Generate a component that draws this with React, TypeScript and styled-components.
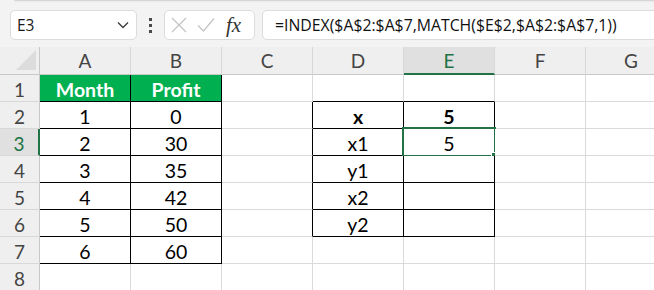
import React from 'react'
import styled, { createGlobalStyle } from 'styled-components'

const GlobalStyle = createGlobalStyle`
  html, body {
    margin: 0;
    padding: 0;
    background: #f3f3f3;
  }
  #root {
    width: 654px;
    height: 290px;
    overflow: hidden;
  }
`

const GREEN = '#217346'
const GRID = '#dadada'

interface CellData {
  text?: string
  bold?: boolean
  fill?: string
  color?: string
  right?: boolean
  bottom?: boolean
  selected?: boolean
}

const COLUMNS = ['A', 'B', 'C', 'D', 'E', 'F', 'G']
const ACTIVE_COL = 'E'
const ACTIVE_ROW = 3

const months = ['1', '2', '3', '4', '5', '6']
const profits = ['0', '30', '35', '42', '50', '60']
const labels = ['x', 'x1', 'y1', 'x2', 'y2']

const buildSheet = (): CellData[][] => {
  const rows: CellData[][] = []
  for (let r = 1; r <= 8; r++) {
    const row: CellData[] = COLUMNS.map(() => ({}))
    if (r === 1) {
      row[0] = { text: 'Month', bold: true, fill: '#00b050', color: '#ffffff', right: true, bottom: true }
      row[1] = { text: 'Profit', bold: true, fill: '#00b050', color: '#ffffff', right: true, bottom: true }
      row[3] = { bottom: true }
      row[4] = { bottom: true }
    }
    if (r >= 2 && r <= 7) {
      row[0] = { text: months[r - 2], right: true, bottom: true }
      row[1] = { text: profits[r - 2], right: true, bottom: true }
    }
    if (r >= 2 && r <= 6) {
      row[2] = { right: true }
      row[3] = { text: labels[r - 2], bold: r === 2, right: true, bottom: true }
      row[4] = { right: true, bottom: true }
    }
    if (r === 2) row[4] = { text: '5', bold: true, right: true, bottom: true }
    if (r === 3) row[4] = { text: '5', right: true, bottom: true, selected: true }
    rows.push(row)
  }
  return rows
}

const App: React.FC = () => {
  const sheet = buildSheet()
  return (
    <>
      <GlobalStyle />
      <Window>
        <RibbonEdge />
        <FormulaBar>
          <NameBox>
            <NameText>E3</NameText>
            <svg width="12" height="8" viewBox="0 0 12 8">
              <path d="M1 1.5 L6 6.5 L11 1.5" fill="none" stroke="#3a3a3a" strokeWidth="1.3" />
            </svg>
          </NameBox>
          <Grip>
            <span />
            <span />
            <span />
          </Grip>
          <ButtonGroup>
            <svg width="16" height="16" viewBox="0 0 16 16">
              <path d="M1 1 L15 15 M15 1 L1 15" stroke="#c4c4c4" strokeWidth="1.3" />
            </svg>
            <svg width="18" height="16" viewBox="0 0 18 16">
              <path d="M1 8.5 L6.5 14 L17 1.5" fill="none" stroke="#c4c4c4" strokeWidth="1.3" />
            </svg>
            <Fx>fx</Fx>
          </ButtonGroup>
          <FormulaInput>=INDEX($A$2:$A$7,MATCH($E$2,$A$2:$A$7,1))</FormulaInput>
        </FormulaBar>
        <Sheet>
          <Corner>
            <svg width="22" height="21" viewBox="0 0 22 21">
              <path d="M21 0 L21 20 L1 20 Z" fill="#dcdcdc" />
            </svg>
          </Corner>
          {COLUMNS.map((c) => (
            <ColHeader key={c} $active={c === ACTIVE_COL}>
              {c}
            </ColHeader>
          ))}
          {sheet.map((row, i) => (
            <React.Fragment key={i}>
              <RowHeader $active={i + 1 === ACTIVE_ROW}>{i + 1}</RowHeader>
              {row.map((cell, j) => (
                <Cell
                  key={j}
                  $bold={cell.bold}
                  $fill={cell.fill}
                  $color={cell.color}
                  $right={cell.right}
                  $bottom={cell.bottom}
                >
                  {cell.text}
                  {cell.selected && (
                    <Selection>
                      <FillHandle />
                    </Selection>
                  )}
                </Cell>
              ))}
            </React.Fragment>
          ))}
        </Sheet>
      </Window>
    </>
  )
}

const Window = styled.div`
  width: 654px;
  height: 290px;
  overflow: hidden;
  background: #f3f3f3;
  display: flex;
  flex-direction: column;
`

const RibbonEdge = styled.div`
  height: 1px;
  margin-left: 14px;
  background: #ffffff;
  border-bottom: 1px solid #d6d6d6;
  border-bottom-left-radius: 6px;
  box-shadow: 0 1px 2px rgba(0, 0, 0, 0.06);
`

const FormulaBar = styled.div`
  height: 47px;
  box-sizing: border-box;
  display: flex;
  align-items: center;
  padding: 9px 0 7px 10px;
  font-family: 'Open Sans', 'Noto Sans', sans-serif;
`

const NameBox = styled.div`
  width: 127px;
  height: 30px;
  box-sizing: border-box;
  background: #ffffff;
  border: 1px solid #dcdcdc;
  border-radius: 5px;
  display: flex;
  align-items: center;
  justify-content: space-between;
  padding: 0 7px 0 6px;
`

const NameText = styled.span`
  font-size: 15.5px;
  color: #1a1a1a;
`

const Grip = styled.div`
  width: 27px;
  display: flex;
  flex-direction: column;
  align-items: center;
  gap: 3px;
  span {
    width: 3px;
    height: 3px;
    background: #4a4a4a;
  }
`

const ButtonGroup = styled.div`
  width: 91px;
  height: 30px;
  box-sizing: border-box;
  background: #ffffff;
  border: 1px solid #dcdcdc;
  border-radius: 5px;
  display: flex;
  align-items: center;
  gap: 10px;
  padding-left: 6px;
`

const Fx = styled.span`
  font-family: 'Liberation Serif', 'DejaVu Serif', serif;
  font-style: italic;
  font-size: 21px;
  color: #333333;
  margin-left: 1px;
  line-height: 1;
`

const FormulaInput = styled.div`
  flex: 1;
  height: 30px;
  margin-left: 7px;
  margin-right: -10px;
  box-sizing: border-box;
  background: #ffffff;
  border: 1px solid #dcdcdc;
  border-radius: 5px;
  display: flex;
  align-items: center;
  padding-left: 12px;
  font-size: 15.8px;
  color: #111111;
  white-space: nowrap;
`

const Sheet = styled.div`
  display: grid;
  grid-template-columns: 40px repeat(7, 91px);
  grid-template-rows: 28px;
  grid-auto-rows: 27px;
  background: #ffffff;
  font-family: Lato, 'Open Sans', sans-serif;
`

const Corner = styled.div`
  background: #efefef;
  border-right: 1px solid #c8c8c8;
  border-bottom: 1px solid #c8c8c8;
  box-sizing: border-box;
  display: flex;
  align-items: flex-end;
  justify-content: flex-end;
  padding: 0 2px 3px 0;
`

const ColHeader = styled.div<{ $active?: boolean }>`
  box-sizing: border-box;
  background: ${(p) => (p.$active ? '#e0e0e0' : '#efefef')};
  border-right: 1px solid #d8d8d8;
  border-bottom: ${(p) => (p.$active ? `2px solid ${GREEN}` : '1px solid #c8c8c8')};
  color: ${(p) => (p.$active ? GREEN : '#444444')};
  font-size: 19px;
  display: flex;
  align-items: center;
  justify-content: center;
  padding-top: ${(p) => (p.$active ? '1px' : '0')};
`

const RowHeader = styled.div<{ $active?: boolean }>`
  box-sizing: border-box;
  background: ${(p) => (p.$active ? '#e0e0e0' : '#efefef')};
  border-right: ${(p) => (p.$active ? `2px solid ${GREEN}` : '1px solid #c8c8c8')};
  border-bottom: 1px solid #d8d8d8;
  color: ${(p) => (p.$active ? GREEN : '#444444')};
  font-size: 19px;
  display: flex;
  align-items: center;
  justify-content: center;
  padding-top: 2px;
`

const Cell = styled.div<{ $bold?: boolean; $fill?: string; $color?: string; $right?: boolean; $bottom?: boolean }>`
  position: relative;
  box-sizing: border-box;
  background: ${(p) => p.$fill || '#ffffff'};
  color: ${(p) => p.$color || '#000000'};
  font-weight: ${(p) => (p.$bold ? 700 : 400)};
  font-size: 19.5px;
  border-right: 1px solid ${(p) => (p.$right ? '#000000' : GRID)};
  border-bottom: 1px solid ${(p) => (p.$bottom ? '#000000' : GRID)};
  display: flex;
  align-items: center;
  justify-content: center;
  padding-top: 3px;
`

const Selection = styled.div`
  position: absolute;
  top: -2px;
  left: -2px;
  right: -2px;
  bottom: -2px;
  border: 2px solid ${GREEN};
  pointer-events: none;
`

const FillHandle = styled.div`
  position: absolute;
  right: -4px;
  bottom: -4px;
  width: 5px;
  height: 5px;
  background: ${GREEN};
  border: 1px solid #ffffff;
`

export default App
